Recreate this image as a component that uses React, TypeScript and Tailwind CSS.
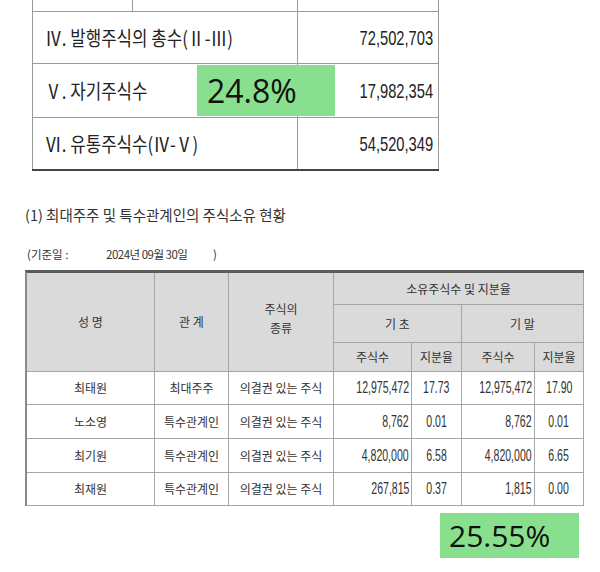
const kr = "font-['Noto_Sans_CJK_KR',sans-serif]";
const num = "font-['Liberation_Sans',sans-serif]";

type Holder = {
    name: string;
    rel: string;
    kind: string;
    s1: string;
    r1: string;
    s2: string;
    r2: string;
};

const holders: Holder[] = [
    { name: "최태원", rel: "최대주주", kind: "의결권 있는 주식", s1: "12,975,472", r1: "17.73", s2: "12,975,472", r2: "17.90" },
    { name: "노소영", rel: "특수관계인", kind: "의결권 있는 주식", s1: "8,762", r1: "0.01", s2: "8,762", r2: "0.01" },
    { name: "최기원", rel: "특수관계인", kind: "의결권 있는 주식", s1: "4,820,000", r1: "6.58", s2: "4,820,000", r2: "6.65" },
    { name: "최재원", rel: "특수관계인", kind: "의결권 있는 주식", s1: "267,815", r1: "0.37", s2: "1,815", r2: "0.00" },
];

function TopTable() {
    const rows = [
        { label: "Ⅳ. 발행주식의 총수(Ⅱ-Ⅲ)", value: "72,502,703", h: "h-[52px] border-b", green: false },
        { label: "Ⅴ. 자기주식수", value: "17,982,354", h: "h-[54px] border-b", green: true },
        { label: "Ⅵ. 유통주식수(Ⅳ-Ⅴ)", value: "54,520,349", h: "h-[53px] border-b-2 border-b-[#444]", green: false },
    ];

    return (
        <div className="ml-[32px] w-[407px] text-[#222]">
            {/* cut off row above */}
            <div className="grid grid-cols-[100px_165px_142px] h-[12px] border-b border-[#9a9a9a]">
                <div className="border-l border-[#9a9a9a]" />
                <div className="border-l border-[#9a9a9a]" />
                <div className="border-l border-r border-[#9a9a9a]" />
            </div>
            {rows.map((r, i) => (
                <div key={i} className={`relative grid grid-cols-[265px_142px] border-[#9a9a9a] ${r.h}`}>
                    <div className="border-l border-[#9a9a9a] flex items-center pl-[12px]">
                        <span className={`inline-block origin-left scale-x-[0.84] whitespace-nowrap text-[20px] ${kr}`}>{r.label}</span>
                    </div>
                    <div className="border-l border-r border-[#9a9a9a] flex items-center justify-end pr-[5px]">
                        <span className={`inline-block origin-right scale-x-[0.7] text-[21px] ${num}`}>{r.value}</span>
                    </div>
                    {r.green ? (
                        <div className="absolute left-[165px] top-[1px] w-[138px] h-[51px] bg-[#88e08f] flex items-center pl-[10px] font-['Open_Sans',sans-serif] text-[32px] text-[#111]">
                            24.8%
                        </div>
                    ) : null}
                </div>
            ))}
        </div>
    );
}

function OwnerTable() {
    const cell = "border-r border-b border-[#a6a6a6] flex items-center justify-center";
    const head = `${cell} bg-[#dadada]`;

    return (
        <div className={`ml-[25px] mt-[8px] w-[559px] grid grid-cols-[128px_74px_105px_78px_50px_73px_49px] grid-rows-[32px_38px_29px_33px_34px_34px_33px] border-t-[3px] border-t-[#5a5a5a] border-l-2 border-l-[#8a8a8a] text-[12px] text-[#333] ${kr}`}>
            <div className={`${head} row-span-3`}>성 명</div>
            <div className={`${head} row-span-3`}>관 계</div>
            <div className={`${head} row-span-3 flex-col leading-[19px] pb-[8px]`}>
                <span>주식의</span>
                <span>종류</span>
            </div>
            <div className={`${head} col-span-4`}>소유주식수 및 지분율</div>
            <div className={`${head} col-span-2`}>기 초</div>
            <div className={`${head} col-span-2`}>기 말</div>
            <div className={head}>주식수</div>
            <div className={head}>지분율</div>
            <div className={head}>주식수</div>
            <div className={head}>지분율</div>

            {holders.map((h, i) => (
                <div key={i} className="contents">
                    <div className={cell}>{h.name}</div>
                    <div className={cell}>{h.rel}</div>
                    <div className={`${cell} whitespace-nowrap`}>{h.kind}</div>
                    <div className={`${cell} justify-end pr-[2px]`}>
                        <span className={`inline-block origin-right scale-x-[0.62] text-[17px] ${num}`}>{h.s1}</span>
                    </div>
                    <div className={cell}>
                        <span className={`inline-block scale-x-[0.62] text-[17px] ${num}`}>{h.r1}</span>
                    </div>
                    <div className={`${cell} justify-end pr-[2px]`}>
                        <span className={`inline-block origin-right scale-x-[0.62] text-[17px] ${num}`}>{h.s2}</span>
                    </div>
                    <div className={cell}>
                        <span className={`inline-block scale-x-[0.62] text-[17px] ${num}`}>{h.r2}</span>
                    </div>
                </div>
            ))}
        </div>
    );
}

export default function App() {
    return (
        <div className="w-[600px] h-[572px] bg-white overflow-hidden text-[#333]">
            <TopTable />
            <div className={`ml-[25px] mt-[34px] h-[20px] leading-[20px] text-[14.5px] whitespace-nowrap ${kr}`}>
                (1) 최대주주 및 특수관계인의 주식소유 현황
            </div>
            <div className={`ml-[27px] mt-[21px] h-[16px] flex text-[11.5px] leading-[16px] whitespace-nowrap ${kr}`}>
                <span className="w-[79px]">(기준일 :</span>
                <span className="w-[107px] tracking-[-0.5px]">2024년 09월 30일</span>
                <span>)</span>
            </div>
            <OwnerTable />
            <div className="ml-[440px] mt-[7px] w-[139px] h-[45px] bg-[#88e08f] flex items-center pl-[9px] font-['Open_Sans',sans-serif] text-[30px] text-[#111]">
                25.55%
            </div>
        </div>
    );
}
